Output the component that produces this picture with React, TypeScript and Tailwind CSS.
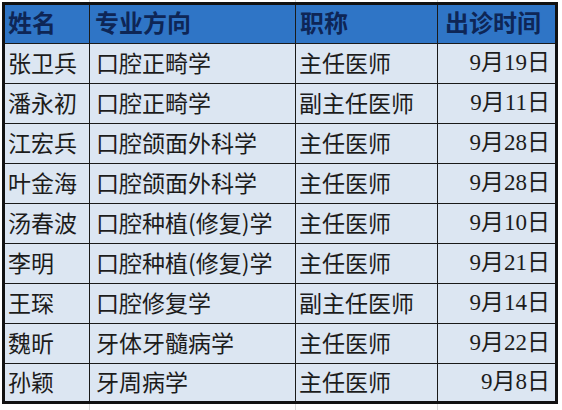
const rows: [string, string, string, string][] = [
    ["张卫兵", "口腔正畸学", "主任医师", "9月19日"],
    ["潘永初", "口腔正畸学", "副主任医师", "9月11日"],
    ["江宏兵", "口腔颌面外科学", "主任医师", "9月28日"],
    ["叶金海", "口腔颌面外科学", "主任医师", "9月28日"],
    ["汤春波", "口腔种植(修复)学", "主任医师", "9月10日"],
    ["李明", "口腔种植(修复)学", "主任医师", "9月21日"],
    ["王琛", "口腔修复学", "副主任医师", "9月14日"],
    ["魏昕", "牙体牙髓病学", "主任医师", "9月22日"],
    ["孙颖", "牙周病学", "主任医师", "9月8日"],
];

const cols = "grid grid-cols-[85px_206px_142px_117px]";

function GridStrip({ h }: { h: string }) {
    // faint spreadsheet gridlines outside the table
    return (
        <div className={`${h} pl-[5px] flex`}>
            <div className={`${cols} w-[550px]`}>
                <div className="border-r border-[#d9d9d9]" />
                <div className="border-r border-[#d9d9d9]" />
                <div className="border-r border-[#d9d9d9]" />
                <div />
            </div>
        </div>
    );
}

export default function App() {
    return (
        <div
            className="w-[562px] h-[410px] bg-white overflow-hidden"
            style={{ fontFamily: '"Noto Sans CJK SC", sans-serif' }}
        >
            <GridStrip h="h-[2px]" />

            <div className="ml-[2px] w-[556px] border-[3px] border-[#111]">
                {/* HEADER */}
                <div className={`${cols} h-[39px] bg-[#2f75c6] border-b border-[#1a1a1a] text-[#0e2656] font-bold text-[24px] leading-none`}>
                    <div className="flex items-center pl-[3px] pb-[4px] border-r border-[#1a1a1a]">姓名</div>
                    <div className="flex items-center pl-[5px] pb-[4px] border-r border-[#1a1a1a]">专业方向</div>
                    <div className="flex items-center pl-[4px] pb-[4px] border-r border-[#1a1a1a]">职称</div>
                    <div className="flex items-center pl-[7px] pb-[4px]">出诊时间</div>
                </div>

                {/* ROWS */}
                {rows.map((r, i) => (
                    <div
                        key={i}
                        className={`${cols} bg-[#dce6f2] text-[#1c1c1c] text-[23px] leading-none ${
                            i === rows.length - 1 ? "h-[37px]" : "h-[40px] border-b border-[#1a1a1a]"
                        }`}
                    >
                        <div className="flex items-center pl-[3px] pb-[3px] border-r border-[#1a1a1a] whitespace-nowrap">{r[0]}</div>
                        <div className="flex items-center pl-[6px] pb-[3px] border-r border-[#1a1a1a] whitespace-nowrap">{r[1]}</div>
                        <div className="flex items-center pl-[3px] pb-[3px] border-r border-[#1a1a1a] whitespace-nowrap">{r[2]}</div>
                        <div
                            className="flex items-center justify-end pr-[5px] pb-[3px] whitespace-nowrap"
                            style={{ fontFamily: '"Liberation Serif", "Noto Sans CJK SC", serif' }}
                        >
                            {r[3]}
                        </div>
                    </div>
                ))}
            </div>

            <GridStrip h="h-[6px]" />
        </div>
    );
}
